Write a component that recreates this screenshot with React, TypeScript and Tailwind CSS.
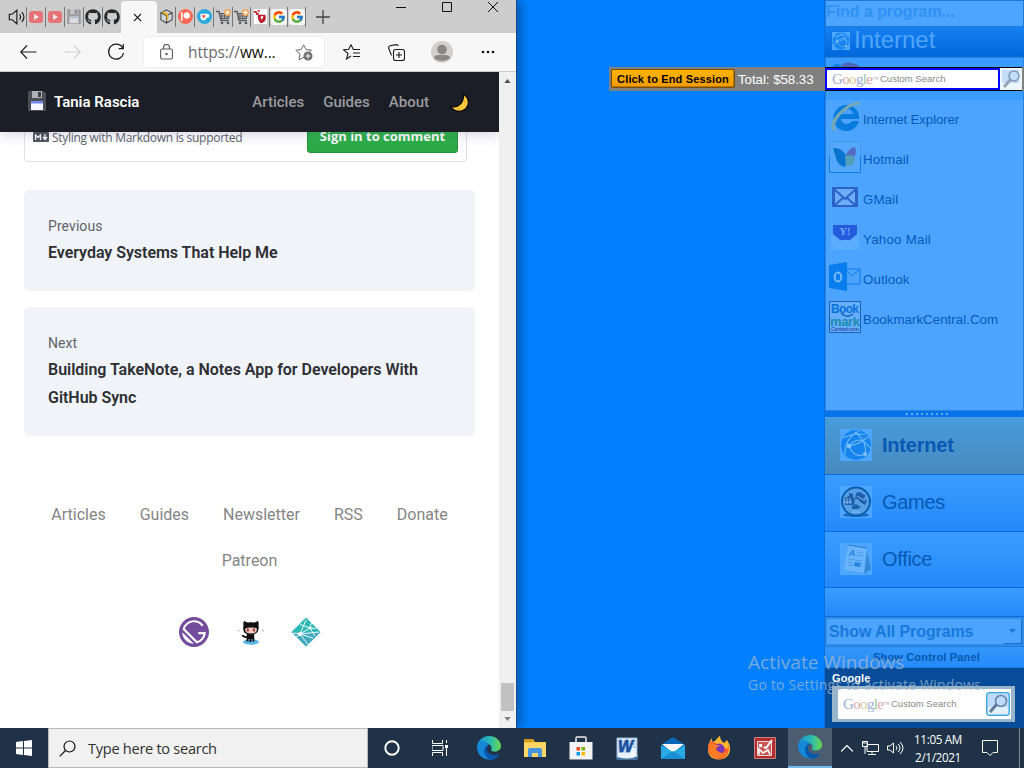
import React from "react";
import { FaYoutube, FaGithub, FaPatreon, FaShoppingCart } from "react-icons/fa";
import { FcGoogle } from "react-icons/fc";
import { SiGatsby } from "react-icons/si";

type IconProps = { className?: string };

const Sep = () => <div className="h-5 w-px shrink-0 bg-[#777]" />;

const TabCell = ({ children, w = "w-[18px]" }: { children: React.ReactNode; w?: string }) => (
  <div className={`flex ${w} shrink-0 items-center justify-center`}>{children}</div>
);

const YoutubeTab = () => (
  <div className="flex h-[12px] w-[14px] items-center justify-center rounded-[3px] bg-[#e47477]">
    <svg viewBox="0 0 6 6" className="size-[6px]"><path d="M1 0v6l5-3z" fill="#fbe6e6" /></svg>
  </div>
);

const Floppy = ({ className, faded }: IconProps & { faded?: boolean }) => (
  <svg viewBox="0 0 18 20" className={className}>
    <path d="M1 0h14l3 2v18H0V1z" fill={faded ? "#9b9b9d" : "#4b4e54"} />
    <path d="M4 0h10v7H4z" fill={faded ? "#c2c3c5" : "#aeb3b8"} />
    <path d="M10 1h3v5h-3z" fill={faded ? "#8c8d90" : "#3d4147"} />
    <path d="M3 10h12v9H3z" fill={faded ? "#dddddf" : "#f7f7ff"} />
    <path d="M3 10h12v2.5H3z" fill={faded ? "#b1c2db" : "#7688ed"} />
  </svg>
);

const CartTab = () => (
  <svg viewBox="0 0 15 16" className="h-4 w-[15px]" fill="none" stroke="#55575a">
    <path d="M0 2.500h3l2 9h8" strokeWidth="1.300" />
    <path d="M3.500 4.500h10l-1 5H4.500M6 4v5M8.500 4v5M11 4v5M4 7h9" />
    <circle cx="6" cy="14" r="1.300" fill="#55575a" stroke="none" /><circle cx="12" cy="14" r="1.300" fill="#55575a" stroke="none" />
    <circle cx="11.500" cy="3.500" r="3.500" fill="#f3a65a" stroke="none" />
    <path d="M9.500 3.500h4M11.500 1.500v4" stroke="#fff" strokeWidth="1.500" />
  </svg>
);

const BoxTab = () => (
  <svg viewBox="0 0 16 16" className="size-[15px]">
    <path d="M8 1l6 3v7.500L8 15l-6-3.500V4z" fill="#d5d9de" stroke="#4c5157" strokeWidth="1.200" />
    <path d="M2 4l6 3 6-3M8 7v8" fill="none" stroke="#34383d" strokeWidth="1.200" />
    <path d="M5 2.500l5 2.500v6l-2 2V7L3 4z" fill="#e8b52c" />
  </svg>
);

function TabStrip() {
  return (
    <div className="flex h-[33px] shrink-0 bg-[#cdcdcd]">
      <div className="flex w-[121px] shrink-0 items-center pl-[7px]">
        <svg viewBox="0 0 20 20" className="mr-[1px] size-[18px] shrink-0" fill="none" stroke="#111" strokeWidth="1.200">
          <path d="M2.500 7h3L11 2.500v15L5.500 13h-3zM14 7c1.500 2 1.500 4 0 6M16.500 4.500c3 3.500 3 7.500 0 11" />
        </svg>
        <Sep /><TabCell><YoutubeTab /></TabCell>
        <Sep /><TabCell><YoutubeTab /></TabCell>
        <Sep /><TabCell><Floppy faded className="h-[15px] w-[14px]" /></TabCell>
        <Sep /><TabCell><FaGithub className="size-4 text-[#24292e]" /></TabCell>
        <Sep /><TabCell><FaGithub className="size-4 text-[#24292e]" /></TabCell>
      </div>
      <div className="mt-px flex w-9 shrink-0 items-center justify-center rounded-t bg-[#f7f7f7] pr-[3px]">
        <svg viewBox="0 0 10 10" className="size-[9px]" stroke="#111" strokeWidth="1.300"><path d="M1 1l8 8M9 1L1 9" /></svg>
      </div>
      <div className="flex w-[149px] shrink-0 items-center">
        <TabCell><BoxTab /></TabCell><Sep />
        <TabCell>
          <div className="flex size-[15px] items-center justify-center rounded-full bg-[#f96854]"><FaPatreon className="size-[9px] text-white" /></div>
        </TabCell><Sep />
        <TabCell>
          <div className="flex size-[15px] items-center justify-center rounded-full bg-[#29abe0]">
            <svg viewBox="0 0 12 10" className="h-[8px] w-[11px]"><path d="M1 1h8.500a2.200 2.200 0 010 5H8.500L7 9H3L1 7z" fill="#fff" /><path d="M5 6.500L2.800 4.200a1.200 1.200 0 012.200-1 1.200 1.200 0 012.200 1z" fill="#ff5a54" /></svg>
          </div>
        </TabCell><Sep />
        <TabCell><CartTab /></TabCell><Sep />
        <TabCell w="w-[17px]"><CartTab /></TabCell><Sep />
        <TabCell>
          <svg viewBox="0 0 14 16" className="h-[15px] w-[13px]"><path d="M0 0h14v16H0z" fill="#fff" /><path d="M0 2h3v2H0zM4 1h2v2H4zM2 4h3v2H2zM4 6h8c2 4 0 9-5 9-2-2-3-5-3-9z" fill="#bd1d2b" /><path d="M7 8l3-.5q0 3-2 4z" fill="#fff" /></svg>
        </TabCell><Sep />
        <TabCell w="w-[17px]"><div className="rounded-[3px] bg-[#f5f5f5] p-px"><FcGoogle className="size-[14px]" /></div></TabCell><Sep />
        <TabCell w="w-[17px]"><div className="rounded-[3px] bg-[#f5f5f5] p-px"><FcGoogle className="size-[14px]" /></div></TabCell><Sep />
      </div>
      <svg viewBox="0 0 14 14" className="ml-[10px] mt-[10px] size-[14px] shrink-0" stroke="#444" strokeWidth="1.300"><path d="M7 0v14M0 7h14" /></svg>
      <div className="ml-auto flex items-start pt-[2px]">
        <svg viewBox="0 0 10 10" className="mr-9 size-[10px]"><path d="M0 5.500h10" stroke="#111" /></svg>
        <svg viewBox="0 0 10 10" className="mr-9 size-[10px]" fill="none"><path d="M.5.5h9v9h-9z" stroke="#111" /></svg>
        <svg viewBox="0 0 10 10" className="mr-[18px] size-[10px]"><path d="M0 0l10 10M10 0L0 10" stroke="#111" /></svg>
      </div>
    </div>
  );
}

function Toolbar() {
  return (
    <div className="flex h-[39px] shrink-0 items-center border-b border-[#c7cbce] bg-[#f7f7f7]">
      <svg viewBox="0 0 17 14" className="ml-5 h-[14px] w-[17px]" fill="none" stroke="#1a1a1a" strokeWidth="1.100"><path d="M7 .5L.7 7 7 13.500M.7 7H16.500" /></svg>
      <svg viewBox="0 0 17 14" className="ml-[27px] h-[14px] w-[17px]" fill="none" stroke="#cfcfcf" strokeWidth="1.100"><path d="M10 .5L16.300 7 10 13.500M16.300 7H.5" /></svg>
      <svg viewBox="0 0 18 18" className="ml-[26px] size-[18px]" fill="none" stroke="#1a1a1a" strokeWidth="1.200"><path d="M15.700 5A7.500 7.500 0 1016.500 10M16.300 1v4.600h-4.600" /></svg>
      <div className="ml-[19px] flex h-[30px] w-[180px] items-center rounded bg-white shadow-[0_0_2px_rgba(0,0,0,.12)]">
        <svg viewBox="0 0 13 16" className="ml-4 h-[16px] w-[13px]" fill="none" stroke="#5b5b5b" strokeWidth="1.100"><rect x=".6" y="5" width="11.800" height="10" rx="1.500" /><path d="M3.500 5V3.500a3 3 0 016 0V5" /><circle cx="6.500" cy="10" r=".7" fill="#5b5b5b" /></svg>
        <span className="ml-[15px] mt-px w-[88px] whitespace-nowrap font-['Open_Sans',sans-serif] text-[15.500px] tracking-[-0.120px] text-[#6b6b6b]">https://<span className="text-[#111]">ww...</span></span>
        <svg viewBox="0 0 18 17" className="ml-[19px] h-[17px] w-[18px]" fill="none" stroke="#6b6b6b"><path d="M9 13l-5 2.800 1-5.800L.8 6.200l5.500-.7L8.500.9 11 5.500l5.500.7-2.300 2" /><circle cx="13" cy="12" r="4.500" fill="#707070" stroke="none" /><path d="M13 9.500v5M10.500 12h5" stroke="#fff" /></svg>
      </div>
      <svg viewBox="0 0 18 16" className="ml-[19px] h-[16px] w-[18px]" fill="none" stroke="#1a1a1a" strokeWidth="1.100"><path d="M8 12l-4.500 3L5 9.500.7 5.800l5-.5L8 .8l2.300 4.700H17M10 9h7M10 12.500h7" /></svg>
      <svg viewBox="0 0 17 17" className="ml-[27px] size-[17px]" fill="none" stroke="#1a1a1a" strokeWidth="1.100"><path d="M3.500 11.500L.8 4.500a2 2 0 011.400-2.700l6-1.200a2 2 0 012 1.400" /><rect x="5.500" y="5.500" width="11" height="11" rx="2" /><path d="M11 8v6M8 11h6" /></svg>
      <svg viewBox="0 0 22 22" className="ml-[26px] size-[22px]"><circle cx="11" cy="11" r="11" fill="#d2d0ce" /><circle cx="11" cy="8.500" r="4.800" fill="#8a8886" /><path d="M3 17c.5-3 3-3 8-3s7.500 0 8 3c-4 4-12 4-16 0z" fill="#8a8886" /></svg>
      <svg viewBox="0 0 14 4" className="ml-[28px] h-1 w-[14px]" fill="#111"><circle cx="2" cy="2" r="1.300" /><circle cx="7" cy="2" r="1.300" /><circle cx="12" cy="2" r="1.300" /></svg>
    </div>
  );
}

const Moon = () => (
  <svg viewBox="0 0 20 20" className="size-5"><path d="M13.500 1C19 5 20 11 16 15.500 11.500 20 4 19 1 13.500 8 15.500 14 10 13.500 1z" fill="#ffc83d" stroke="#080808" strokeWidth="1.300" /><circle cx="15" cy="9" r="1" fill="#e8a62c" /><circle cx="9" cy="16" r="1" fill="#e8a62c" /></svg>
);

const Octocat = () => (
  <svg viewBox="0 0 30 30" className="size-[30px]">
    <ellipse cx="16" cy="25" rx="8" ry="2.800" fill="#5cb8e6" />
    <path d="M9 4l3.500 1.500q3.500-.7 7 0L23 4q1 2 .5 4 1.200 8-4.500 9.200l.5 7.300h-2V22h-1v3h-2v-3h-1v2.500h-2V21q-4 0-5-3h2q1 1.500 3 1l.5-2Q7 16 8.500 8 8 6 9 4z" fill="#101010" />
    <path d="M10 12q1-2 6-1.500 5-.5 6 1.500 0 4.500-6 4.500T10 12z" fill="#efc8bb" />
    <ellipse cx="12.800" cy="13" rx="1.200" ry="1.700" fill="#9f3e4a" /><ellipse cx="19" cy="13" rx="1.200" ry="1.700" fill="#9f3e4a" />
    <path d="M2.500 13.500l2 .5M27 13.500l2 .5" stroke="#aaa" />
  </svg>
);

const Netlify = () => (
  <svg viewBox="0 0 30 30" className="size-[30px]">
    <path d="M15 .5L29.500 15 15 29.500.5 15z" fill="#2fb9b5" />
    <path d="M15 29.500L.5 15h29z" fill="#42a9c1" />
    <path d="M9 7.500l10 3.500 6 .5M2 16l7 1 10-6 1.500-5.500M9 17l8 10.500M9 17l19-2M9 17l6-14M19 11l5 8M5 20l4-3 13 4" stroke="#fff" strokeWidth=".9" fill="none" />
    <circle cx="9" cy="17" r="2" fill="#fff" /><circle cx="19" cy="11" r="1.400" fill="#fff" />
  </svg>
);

function ArticleCard({ label, title }: { label: string; title: string }) {
  return (
    <div className="rounded-[5px] bg-[#f0f4f9] px-6 pb-6 pt-6">
      <div className="text-sm leading-6 tracking-[.08px] text-[#5f6368]">{label}</div>
      <div className="mt-px text-base font-semibold leading-7 tracking-[-.03px] text-[#2d2e32]">{title}</div>
    </div>
  );
}

function BrowserWindow() {
  return (
    <div className="absolute left-0 top-0 flex h-[728px] w-[517px] flex-col border-r border-[#174c84] bg-white shadow-[4px_0_10px_rgba(0,0,0,.32)]">
      <TabStrip />
      <Toolbar />
      <div className="flex min-h-0 flex-1 font-['Roboto',sans-serif]">
        <div className="flex w-[499px] shrink-0 flex-col overflow-hidden">
          <header className="z-10 flex h-[60px] shrink-0 items-center bg-[#1b1e26] pl-[28px] pr-[29px] font-medium shadow-[0_3px_12px_rgba(40,30,80,.18)]">
            <Floppy className="mb-[3px] h-5 w-[18px]" />
            <span className="ml-2 text-[15px] font-semibold text-white">Tania Rascia</span>
            <nav className="ml-auto flex gap-[19px] text-[15px] text-[#9a9b9f]"><span>Articles</span><span>Guides</span><span>About</span></nav>
            <div className="ml-[21px] mt-[2px]"><Moon /></div>
          </header>
          <div className="mx-6 mr-8 flex h-[30px] shrink-0 justify-between rounded-b border border-t-0 border-[#dfe2e6] pl-2 pr-2">
            <div className="flex h-[10px] items-center text-[12px] text-[#606770]">
              <svg viewBox="0 0 16 10" className="mr-[3px] h-[10px] w-[16px]"><rect width="16" height="10" rx="1" fill="#505762" /><path d="M2.500 8V3L5 5.500 7.500 3v5M12 2v5M10 5l2 2.500L14 5" fill="none" stroke="#fff" strokeWidth="1.300" /></svg>
              <span className="mt-[2px] whitespace-nowrap font-['Open_Sans',sans-serif] tracking-[-0.290px]">Styling with Markdown is supported</span>
            </div>
            <div className="-mt-3 flex h-[33px] w-[151px] items-center justify-center rounded-[3px] border border-[#25923c] bg-gradient-to-b from-[#34bd50] to-[#29a745] font-['Open_Sans',sans-serif] text-[13px] font-bold text-white">Sign in to comment</div>
          </div>
          <main className="mx-6 mt-7 flex flex-col gap-4">
            <ArticleCard label="Previous" title="Everyday Systems That Help Me" />
            <ArticleCard label="Next" title="Building TakeNote, a Notes App for Developers With GitHub Sync" />
          </main>
          <footer className="mt-[67px] flex flex-col items-center text-base text-[#858585]">
            <div className="flex gap-[34px] leading-6"><span>Articles</span><span>Guides</span><span>Newsletter</span><span>RSS</span><span>Donate</span></div>
            <div className="mt-[22px] leading-6">Patreon</div>
            <div className="mt-[44px] flex gap-[26px]"><SiGatsby className="size-[30px] text-[#744c9e]" /><Octocat /><Netlify /></div>
          </footer>
        </div>
        <div className="flex w-[17px] flex-col items-center bg-[#f0f0f0] py-[7px]">
          <svg viewBox="0 0 8 5" className="h-[4px] w-[7px]"><path d="M0 5l4-5 4 5z" fill="#505050" /></svg>
          <div className="mt-auto h-7 w-[13px] bg-[#c1c1c1]" />
          <svg viewBox="0 0 8 5" className="mt-[6px] h-[4px] w-[7px]"><path d="M0 0l4 5 4-5z" fill="#808080" /></svg>
        </div>
      </div>
    </div>
  );
}

const Globe = ({ className }: IconProps) => (
  <svg viewBox="0 0 32 32" className={className}>
    <path d="M0 0h32v32H0z" fill="#4da6ff" />
    <circle cx="16" cy="16" r="15" fill="#1684ed" />
    <path d="M3 9q13-6 22-3M5 25Q5 9 19 2M9 17Q20 4 31 20M9 17q5 13 17 8M15 3q13 10 10 23M9 17q9-1 19-9" fill="none" stroke="#6eb8fb" strokeWidth="1.200" />
    <circle cx="9" cy="17" r="2.200" fill="#83c1fc" /><circle cx="25" cy="25" r="2" fill="#83c1fc" />
  </svg>
);

const IEIcon = () => (
  <svg viewBox="0 0 32 32" className="size-8">
    <path d="M30 20A13 13 0 1130 14v4H12q1 5 6 5 3 0 5-3zM12 13h12q-1-5-6-5t-6 5z" fill="#087bdc" fillRule="evenodd" />
    <path d="M7 30C-5 30 8 7 24 2q8-3 7 3-1-3-7 0C13 10 2 23 7 30z" fill="#76a8b4" />
  </svg>
);
const HotmailIcon = () => (
  <svg viewBox="0 0 32 32" className="size-8"><path d="M.5.5h31v31H.5z" fill="#55a7fb" stroke="#449bea" /><path d="M.5 16v15.500h31V16" fill="none" stroke="#087ceb" /><path d="M4 7q10-1 14 10l-2 9Q8 24 7 17L4 7z" fill="#0876ce" /><path d="M16 17Q19 7 26 6q3 8-4 13z" fill="#536bc0" /><path d="M16 15q9-3 10 4-2 8-9 6z" fill="#549fba" /></svg>
);
const GmailIcon = () => (
  <svg viewBox="0 0 32 32" className="size-8"><path d="M3 6h26v20H3z" fill="#2d62c8" /><path d="M6 8h20v16H6z" fill="#6cadf8" /><path d="M5 8l11 10L27 8M6 24l9-8M26 24l-9-8" fill="none" stroke="#2d62c8" strokeWidth="2" /></svg>
);
const YahooIcon = () => (
  <svg viewBox="0 0 32 32" className="size-8"><path d="M2 12h28v17H2z" fill="#5aadff" /><path d="M4 4h24v9l-7 6H11l-7-6z" fill="#255bdd" /><path d="M2 13l14 10 14-10M2 29l11-9M30 29l-11-9" fill="none" stroke="#52a6fb" /><text x="16" y="14" textAnchor="middle" fontSize="10" fontWeight="bold" fontFamily="Liberation Serif" fill="#71adff">Y!</text></svg>
);
const OutlookIcon = () => (
  <svg viewBox="0 0 32 32" className="size-8"><path d="M18 8h13v15H18M18 10l5 5 8-7" fill="none" stroke="#087ded" /><path d="M0 4l18-3v29L0 27z" fill="#087ded" /><ellipse cx="9" cy="16" rx="3.300" ry="4.500" fill="none" stroke="#79baff" strokeWidth="2" /></svg>
);
const BookmarkIcon = () => (
  <svg viewBox="0 0 32 32" className="size-8" fontFamily="Liberation Sans" fontWeight="bold"><path d="M.5.5h31v31H.5z" fill="#66adfa" stroke="#1762b8" /><text x="2" y="12" fontSize="12" fill="#0873dc" textLength="28">Book</text><text x="1" y="25" fontSize="13" fill="#1c8cad" textLength="30">mark</text><text x="2" y="30" fontSize="5.500" fill="#3058b5" textLength="28">Central.com</text><path d="M12 12q6 6 12 1" fill="none" stroke="#1761bd" strokeWidth="1.500" /></svg>
);
const GamesIcon = () => (
  <svg viewBox="0 0 32 32" className="size-8"><path d="M0 0h32v32H0z" fill="#4da6ff" /><ellipse cx="16" cy="29" rx="13" ry="2" fill="#176ac0" /><circle cx="16" cy="15.500" r="14" fill="#579fe5" stroke="#085daf" strokeWidth="2" /><path d="M5 12l4-2V7l4 1v3l2 2-1 6H5zM16 7l4-1 6 4-3 2 4 3-2 4-5-3-2-3h-3zM12 20l4-2 5 3-3 2h-6z" fill="#1d5eae" /><path d="M7 12v6M10 12v6M17 10l8 5M12 26h8M4 16h8" stroke="#8bbaf0" /></svg>
);
const OfficeIcon = () => (
  <svg viewBox="0 0 32 32" className="size-8"><path d="M0 0h32v32H0z" fill="#4da6ff" /><path d="M26 4l5 22-7 5z" fill="#287dc7" opacity=".7" /><path d="M8 2l19 3-3 25L4 27z" fill="#6ab4fb" stroke="#5ba5ec" strokeWidth=".5" /><path d="M8 2l19 3" stroke="#287fc8" /><path d="M9 13l4-6 1 6M11 11h3" fill="none" stroke="#1775d8" /><path d="M17 9l6 1M16 12l7 1M8 16l14 2M8 19l5 1M8 22l5 1" fill="none" stroke="#438fe0" strokeWidth=".7" /><path d="M15 19l6 1-1 4-6-1z" fill="#2385dc" /></svg>
);

const GoogleWord = () => (
  <span className="w-[45px] font-['Liberation_Serif',serif] text-[15px] leading-none tracking-[-.65px] text-[#9badd8]">G<span className="text-[#dfa5a5]">o</span><span className="text-[#d5c990]">o</span>g<span className="text-[#9ac79a]">l</span><span className="text-[#dfa5a5]">e</span><sup className="text-[6px] tracking-normal text-[#aaa]">™</sup></span>
);
const SearchLabel = () => (
  <div className="flex flex-1 items-center gap-[3px] whitespace-nowrap pl-[5px] font-['Liberation_Sans',sans-serif]"><GoogleWord /><span className="text-[9.500px] text-[#898989]">Custom Search</span></div>
);
const SearchButton = ({ className }: IconProps) => (
  <svg viewBox="0 0 24 24" className={className}><rect x=".7" y=".7" width="22.600" height="22.600" rx="2.500" fill="#bed9fa" stroke="#36aadc" strokeWidth="1.300" /><path d="M2 15h20v7H2z" fill="#e1effd" /><path d="M4 20l7-8" stroke="#657a95" strokeWidth="3" /><circle cx="15" cy="9" r="5.500" fill="#bddbfb" stroke="#6384aa" strokeWidth="1.500" /></svg>
);
const SoftSearchButton = () => (
  <svg viewBox="0 0 22 22" className="size-[22px]"><path d="M0 0h22v22H0z" fill="#edf5fd" /><path d="M2 2h17v13H2z" fill="#c4dcf6" /><path d="M4 19l7-8" stroke="#93a2b5" strokeWidth="3" /><circle cx="14" cy="8" r="5" fill="#c4defa" stroke="#8199b7" strokeWidth="1.500" /></svg>
);

const programs = [
  { name: "Internet Explorer", icon: <IEIcon />, spacing: "tracking-[-.13px]" },
  { name: "Hotmail", icon: <HotmailIcon />, spacing: "tracking-[.1px]" },
  { name: "GMail", icon: <GmailIcon />, spacing: "tracking-[.1px]" },
  { name: "Yahoo Mail", icon: <YahooIcon />, spacing: "tracking-[.25px]" },
  { name: "Outlook", icon: <OutlookIcon />, spacing: "tracking-[.08px]" },
  { name: "BookmarkCentral.Com", icon: <BookmarkIcon />, spacing: "tracking-[.03px]" },
];

function CategoryRow({ icon, name, h, active }: { icon: React.ReactNode; name: string; h: string; active?: boolean }) {
  return (
    <div className={`flex ${h} items-center border-b border-[#0869dc] pb-[2px] pl-[15px] text-xl text-[#0759b4] ${active ? "bg-gradient-to-b from-[#489bdc] to-[#478abd] font-bold" : "bg-gradient-to-b from-[#3b9cff] to-[#238afa]"}`}>
      {icon}<span className={active ? "ml-[10px] tracking-[-.2px]" : "ml-[10px] tracking-[-.3px]"}>{name}</span>
    </div>
  );
}

function SidePanel() {
  return (
    <aside className="absolute right-0 top-0 flex h-[728px] w-[200px] flex-col border-l border-[#0971df] font-['Liberation_Sans',sans-serif]">
      <div className="flex h-[27px] shrink-0 items-center border border-[#1d7bde] bg-[#4da5ff] pb-[3px] text-base font-bold tracking-[-.06px] text-[#2f91f2]">Find a program...</div>
      <div className="flex h-[30px] shrink-0 items-center border-b border-[#0969cf] bg-gradient-to-b from-[#1680f0] to-[#0068dd] pl-[7px]"><Globe className="mb-px size-[18px]" /><span className="mb-[3px] ml-[4px] text-2xl leading-6 text-[#50a5fb]">Internet</span></div>
      <div className="flex h-[354px] shrink-0 flex-col border border-[#2681df] bg-[#4ca4ff]">
        <div className="flex h-[42px] shrink-0 bg-[#3a9cff] pl-[5px] pt-[4px]"><svg viewBox="0 0 30 24" className="h-6 w-[30px]"><circle cx="6" cy="8" r="6" fill="#137fdf" /><path d="M10 2q10-4 18 2v8H17z" fill="#4b67b8" /></svg></div>
        {programs.map((p) => <div key={p.name} className={`flex h-10 shrink-0 items-center pl-[3px] text-[13.300px] text-[#075ab5] ${p.spacing}`}><div className="flex h-10 w-[34px] items-start pt-px">{p.icon}</div><span>{p.name}</span></div>)}
      </div>
      <div className="flex h-[6px] shrink-0 items-center justify-center gap-[3px] bg-[#0874eb] pl-1">{Array.from({ length: 9 }, (_, i) => <i key={i} className="size-[2px] bg-[#64abf4]" />)}</div>
      <CategoryRow name="Internet" active h="h-[58px]" icon={<Globe className="size-8" />} />
      <CategoryRow name="Games" h="h-[57px]" icon={<GamesIcon />} />
      <CategoryRow name="Office" h="h-[56px]" icon={<OfficeIcon />} />
      <div className="h-[29px] shrink-0 border-b border-[#0869dc] bg-gradient-to-b from-[#3b9cff] to-[#238afa]" />
      <div className="flex h-[29px] shrink-0 border-2 border-[#308be4] bg-[#4ca4ff] pl-[2px] text-base font-bold leading-[25px] tracking-[-.1px] text-[#1679d8]">Show All Programs<div className="ml-auto flex w-[18px] items-center justify-center border-b border-r border-[#1771ca]"><svg viewBox="0 0 7 4" className="h-1 w-[7px]"><path d="M0 0h7L3.500 4z" fill="#1879d6" /></svg></div></div>
      <div className="flex h-[22px] shrink-0 items-center justify-center border-y border-[#1b7ce0] bg-gradient-to-b from-[#3697fa] to-[#238afa] pl-1 text-[11px] font-bold tracking-[.17px] text-[#0759ad]">Show Control Panel</div>
      <div className="h-[60px] bg-[#064c98] pl-[7px] pt-[3px]">
        <div className="text-[11px] font-bold leading-[14px] tracking-[.1px] text-white">Google</div>
        <div className="mt-px flex h-9 w-[183px] bg-[#96b5cb] py-[3px] pl-[6px] pr-1"><div className="flex w-full items-center bg-white"><SearchLabel /><SearchButton className="mr-px size-6" /></div></div>
      </div>
    </aside>
  );
}

function SessionBar() {
  return (
    <div className="absolute right-0 top-[67px] flex h-6 w-[415px] bg-[#808080] font-['Liberation_Sans',sans-serif]">
      <div className="ml-[2px] mt-[2px] flex h-[19px] w-[124px] items-center justify-center rounded-[2px] border border-[#754c00] bg-gradient-to-b from-[#ffb400] to-[#f39a00] pt-[2px] text-[11px] font-bold tracking-[.15px] text-black shadow-[inset_-1px_-1px_#bd7800]">Click to End Session</div>
      <div className="ml-[3px] w-[87px] text-[13.300px] leading-[25px] tracking-[-.05px] text-white">Total: $58.33</div>
      <div className="flex w-[197px] border-y border-black bg-black"><div className="flex w-[175px] items-center border-2 border-[#0000ff] bg-white"><SearchLabel /></div><SoftSearchButton /></div>
    </div>
  );
}

const Edge = () => (
  <svg viewBox="0 0 24 24" className="size-6">
    <defs><linearGradient id="edgeTop"><stop stopColor="#1688d9" /><stop offset=".55" stopColor="#2bbbb3" /><stop offset="1" stopColor="#69d84c" /></linearGradient></defs>
    <path d="M0 12C0 5 5 0 12 0s12 5 12 10c0 6-8 7-10 4 2-3-1-7-6-7-4 0-7 2-8 5z" fill="url(#edgeTop)" />
    <path d="M0 11c1-6 9-7 12-2-4 0-4 7 1 9 3 2 7 1 9 0-3 5-8 7-13 5-5-1-9-6-9-12z" fill="#1687d8" />
    <path d="M9 10c-4 4-1 12 5 14 3 0 7-3 8-6-6 3-12 0-12-5 0-2 1-3 2-4-1 0-2 0-3 1z" fill="#0755a7" />
  </svg>
);
const Folder = () => <svg viewBox="0 0 22 20" className="h-5 w-[22px]"><path d="M0 1h9l2 3h11v15H0z" fill="#f9c642" /><path d="M0 1h9l1 3H0z" fill="#d59a1e" /><path d="M0 5h22v14H0z" fill="#ffd767" /><path d="M4 12q0-2 2-2h10q2 0 2 2v7h-4v-4H8v4H4z" fill="#4596df" /></svg>;
const Store = () => <svg viewBox="0 0 24 24" className="size-6"><path d="M7 7V2q0-1 1-1h8q1 0 1 1v5" stroke="#eee" strokeWidth="1.500" fill="none" /><path d="M.5 6h23v17.500H.5z" fill="#f3f3f3" /><path d="M7.500 11H11v3.500H7.500z" fill="#e84b21" /><path d="M12.500 11H16v3.500h-3.500z" fill="#78b500" /><path d="M7.500 16H11v3.500H7.500z" fill="#009de5" /><path d="M12.500 16H16v3.500h-3.500z" fill="#ffb900" /></svg>;
const Word = () => <svg viewBox="0 0 23 23" className="size-[23px]"><path d="M1 1h20v21H1z" fill="#e9f1fb" stroke="#8fb3da" /><path d="M16 4h4M17 7h3M17 10h3" stroke="#8aabd3" /><path d="M1 3h15v13H1z" fill="#c0d8f1" /><text x="2" y="15" fontSize="16" fontStyle="italic" fontWeight="bold" fontFamily="Liberation Sans" fill="#174f9d" stroke="#174f9d" strokeWidth=".6">W</text><path d="M15 12l7 8-7-1z" fill="#f8fbff" /><path d="M1 20q13 4 20-1v3H1z" fill="#3275bb" /></svg>;
const Mail = () => <svg viewBox="0 0 24 22" className="h-[22px] w-6"><path d="M0 8l12-8 12 8v14H0z" fill="#0867b7" /><path d="M1 7h22L12 16z" fill="#fff" /><path d="M0 8l12 7L24 8v14H0z" fill="#28abe5" /><path d="M0 22l12-8 12 8z" fill="#198ed4" /></svg>;
const Firefox = () => <svg viewBox="0 0 24 24" className="size-6"><path d="M1 14C1 8 3 5 5 2v4l3-1q4-5 5-5 0 4 4 7l3-3c6 8 3 19-7 19.500C6 24 1 20 1 14z" fill="#ffb52e" /><path d="M1 13Q1 7 5 5l5 3 8 4q3 2 4-2c0 8-4 13-9 13S1 19 1 13z" fill="#ff5a34" /><circle cx="12" cy="13" r="5.500" fill="#7b35bb" /><path d="M3 7q4 0 6 2h5q-4 1-5 4 5 7 12 2-3 8-12 7C2 20 0 12 3 7z" fill="#fd7a27" /></svg>;
const RedApp = () => <svg viewBox="0 0 22 22" className="size-[22px]"><path d="M.5.5h21v21H.5z" fill="#b52c2f" stroke="#c98282" /><path d="M3.500 4.500h14v14h-14z" fill="#c95655" stroke="#f3dada" /><path d="M5 17.500V12l4 4 5-3 2 4.500M6 8l2 2" fill="none" stroke="#fff" strokeWidth="1.700" /><path d="M10 10l2 1 6-8" fill="none" stroke="#fff" strokeWidth="2" /><path d="M5 7h3v3H5z" fill="#fff" /></svg>;

function Taskbar() {
  return (
    <div className="absolute bottom-0 left-0 flex h-10 w-full items-center bg-[#203247] font-['Open_Sans',sans-serif] text-white">
      <div className="flex w-12 justify-center"><svg viewBox="0 0 16 16" className="size-4" fill="#fff"><path d="M0 2l7-.9v6.400H0zM8 1l8-1v7.500H8zM0 8.500h7v6.400L0 14zM8 8.500h8V16l-8-1z" /></svg></div>
      <div className="flex h-10 w-80 items-center border border-[#b8b8b8] bg-[#f1f1f1] text-[#303030]">
        <svg viewBox="0 0 17 17" className="ml-[10px] size-[17px]" fill="none" stroke="#111" strokeWidth="1.200"><circle cx="10.500" cy="6.500" r="5.500" /><path d="M6.500 10.500L.7 16.300" /></svg><span className="ml-3 mt-px text-[14.600px] tracking-[-.29px]">Type here to search</span>
      </div>
      <div className="flex w-12 justify-center"><svg viewBox="0 0 16 16" className="size-4"><circle cx="8" cy="8" r="6.700" fill="none" stroke="#fff" strokeWidth="1.900" /></svg></div>
      <div className="flex w-12 justify-center"><svg viewBox="0 0 16 16" className="size-4" fill="none" stroke="#fff"><path d="M.5 0v3.500h10V0M.5 16v-3.500h10V16M0 5.500h11v5H0zM14.500 0v3M14.500 8v8" /><path d="M13 5h3v3h-3z" fill="#fff" stroke="none" /></svg></div>
      {[<Edge />, <Folder />, <Store />, <Word />, <Mail />, <Firefox />, <RedApp />].map((icon, i) => <div key={i} className="flex w-[46px] justify-center pl-[4px]">{icon}</div>)}
      <div className="ml-[2px] flex h-10 w-11 items-center justify-center border-b-2 border-[#78b9ed] bg-[#4c5d71]"><Edge /></div>
      <div className="ml-[9px] flex items-center gap-[9px]">
        <svg viewBox="0 0 12 7" className="h-[7px] w-3"><path d="M0 6.500l6-6 6 6" fill="none" stroke="#fff" strokeWidth="1.200" /></svg>
        <svg viewBox="0 0 17 14" className="h-[14px] w-[17px]" fill="none" stroke="#fff"><path d="M5 3.500h11.500v7H5zM10 10.500v3M6 13.500h8M.5.500h5v5h-5zM3 6v7" /><path d="M2 1v2M4 1v2" /></svg>
        <svg viewBox="0 0 17 14" className="-ml-[1px] h-[14px] w-[17px]" fill="none" stroke="#fff"><path d="M.5 5v4H3l3.500 3V2L3 5zM9 5q2 2 0 4M11 3q4 4 0 8M13 1q6 6 0 12" /></svg>
      </div>
      <div className="ml-[8px] w-[52px] whitespace-nowrap text-center text-[11.700px] leading-[18px] tracking-[-.35px]">11:05 AM<br />2/1/2021</div>
      <svg viewBox="0 0 16 17" className="ml-[18px] h-[17px] w-4" fill="none" stroke="#fff"><path d="M.5.500h15v12H11l-3 3-3-3H.5z" /></svg>
      <div className="ml-auto mr-[4px] h-10 w-px bg-[#7b8794]" />
    </div>
  );
}

export default function App() {
  return (
    <div className="relative h-[768px] w-[1024px] overflow-hidden bg-[#0080ff]">
      <BrowserWindow />
      <SidePanel />
      <SessionBar />
      <div className="pointer-events-none absolute left-[748px] top-[650px] whitespace-nowrap font-['Open_Sans',sans-serif] text-[#a4b8cc]/75">
        <div className="text-[19px] leading-6 tracking-[.03px]">Activate Windows</div><div className="mt-px text-[14px] leading-5 tracking-[.22px]">Go to Settings to activate Windows.</div>
      </div>
      <Taskbar />
    </div>
  );
}
